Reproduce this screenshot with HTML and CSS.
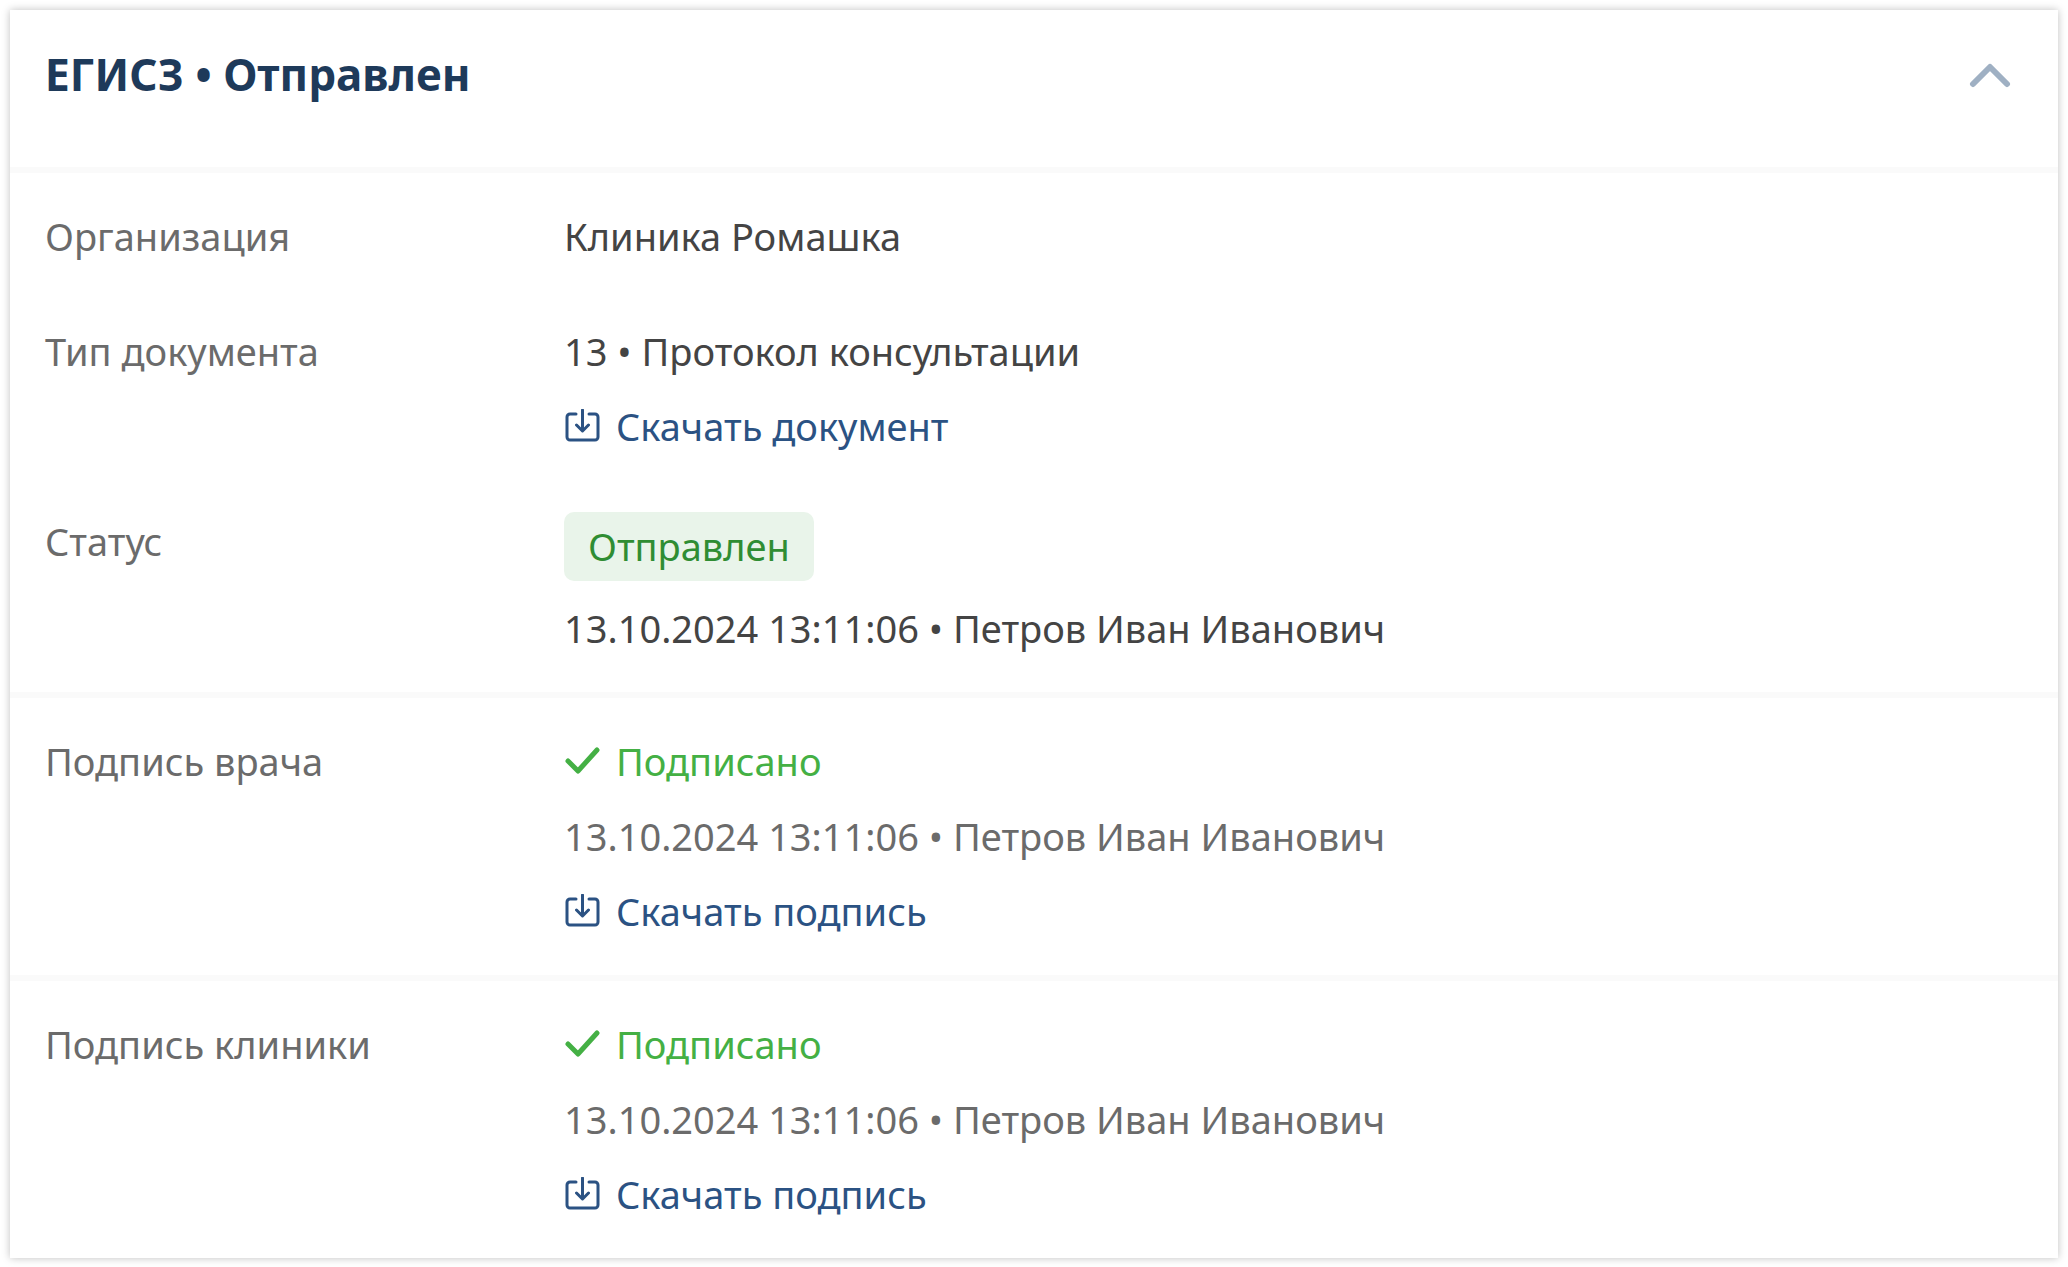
FILE: index.html
```html
<!DOCTYPE html>
<html lang="ru">
<head>
    <meta charset="UTF-8">
    <meta name="viewport" content="width=device-width, initial-scale=1.0">
    <title>ЕГИСЗ</title>
    <link rel="stylesheet" href="styles.css">
</head>
<body>
    <svg class="sprite" aria-hidden="true">
        <symbol id="icon-download" viewBox="0 0 36 36">
            <path d="M12 5H6a3 3 0 0 0-3 3v20a3 3 0 0 0 3 3h25a3 3 0 0 0 3-3V8a3 3 0 0 0-3-3h-6M18.500 1v20M12.500 16l6 6 6-6"/>
        </symbol>
        <symbol id="icon-check" viewBox="0 0 36 36">
            <path d="M4 17l10 10L33 6"/>
        </symbol>
    </svg>

    <main class="card">
        <header class="card-header">
            <h1>ЕГИСЗ • Отправлен</h1>
            <button class="toggle" type="button" aria-label="Свернуть" aria-expanded="true">
                <svg viewBox="0 0 42 26"><path d="M4 22L21 5l17 17"/></svg>
            </button>
        </header>

        <dl class="section">
            <div class="row">
                <dt>Организация</dt>
                <dd><p>Клиника Ромашка</p></dd>
            </div>
            <div class="row">
                <dt>Тип документа</dt>
                <dd>
                    <p>13 • Протокол консультации</p>
                    <a class="download" href="#"><svg class="icon"><use href="#icon-download"/></svg>Скачать документ</a>
                </dd>
            </div>
            <div class="row">
                <dt>Статус</dt>
                <dd class="status">
                    <span class="badge">Отправлен</span>
                    <p>13.10.2024 13:11:06 • Петров Иван Иванович</p>
                </dd>
            </div>
        </dl>

        <dl class="section">
            <div class="row">
                <dt>Подпись врача</dt>
                <dd>
                    <p class="signed"><svg class="icon"><use href="#icon-check"/></svg>Подписано</p>
                    <p class="muted">13.10.2024 13:11:06 • Петров Иван Иванович</p>
                    <a class="download" href="#"><svg class="icon"><use href="#icon-download"/></svg>Скачать подпись</a>
                </dd>
            </div>
        </dl>

        <dl class="section">
            <div class="row">
                <dt>Подпись клиники</dt>
                <dd>
                    <p class="signed"><svg class="icon"><use href="#icon-check"/></svg>Подписано</p>
                    <p class="muted">13.10.2024 13:11:06 • Петров Иван Иванович</p>
                    <a class="download" href="#"><svg class="icon"><use href="#icon-download"/></svg>Скачать подпись</a>
                </dd>
            </div>
        </dl>
    </main>
</body>
</html>
```
FILE: styles.css
```css
* {
    box-sizing: border-box;
}

body {
    margin: 0;
    padding: 10px;
    font-family: "Noto Sans", "Open Sans", sans-serif;
    font-size: 38px;
    line-height: 51px;
    color: #444;
    background-color: #fff;
}

h1, p, dl, dd {
    margin: 0;
}

.sprite {
    display: none;
}

.card {
    background-color: #fff;
    box-shadow: 0 0 8px rgba(0, 0, 0, 0.25);
}

.card-header {
    display: flex;
    justify-content: space-between;
    align-items: flex-start;
    padding: 39px 47px 66px 35px;
}

h1 {
    font-size: 44px;
    font-weight: 700;
    color: #1e3a5a;
}

.toggle {
    padding: 13px 0;
    border: 0;
    background: none;
    cursor: pointer;
}

.toggle svg {
    display: block;
    width: 42px;
    height: 26px;
    fill: none;
    stroke: #9fb0c3;
    stroke-width: 6;
    stroke-linecap: round;
    stroke-linejoin: round;
}

.section {
    display: flex;
    flex-direction: column;
    gap: 64px;
    padding: 38px 35px;
    border-top: 6px solid #fafafa;
}

.row {
    display: grid;
    grid-template-columns: 519px 1fr;
}

dt, .muted {
    color: #6b6b6b;
}

dd {
    display: flex;
    flex-direction: column;
    align-items: flex-start;
    gap: 24px;
}

/* the badge is taller than a line of text */
.status {
    gap: 22px;
    margin-top: -4px;
}

.icon {
    width: 36px;
    height: 36px;
    fill: none;
    stroke: currentColor;
    stroke-width: 3;
    stroke-linecap: round;
    stroke-linejoin: round;
}

.download, .signed {
    display: flex;
    align-items: center;
    gap: 16px;
}

.download {
    color: #2b5283;
    text-decoration: none;
}

.signed {
    color: #44b044;
}

.signed .icon {
    stroke-width: 5;
}

.badge {
    padding: 9px 24px;
    border-radius: 10px;
    color: #2f8d33;
    background-color: #e9f4ea;
}
```
